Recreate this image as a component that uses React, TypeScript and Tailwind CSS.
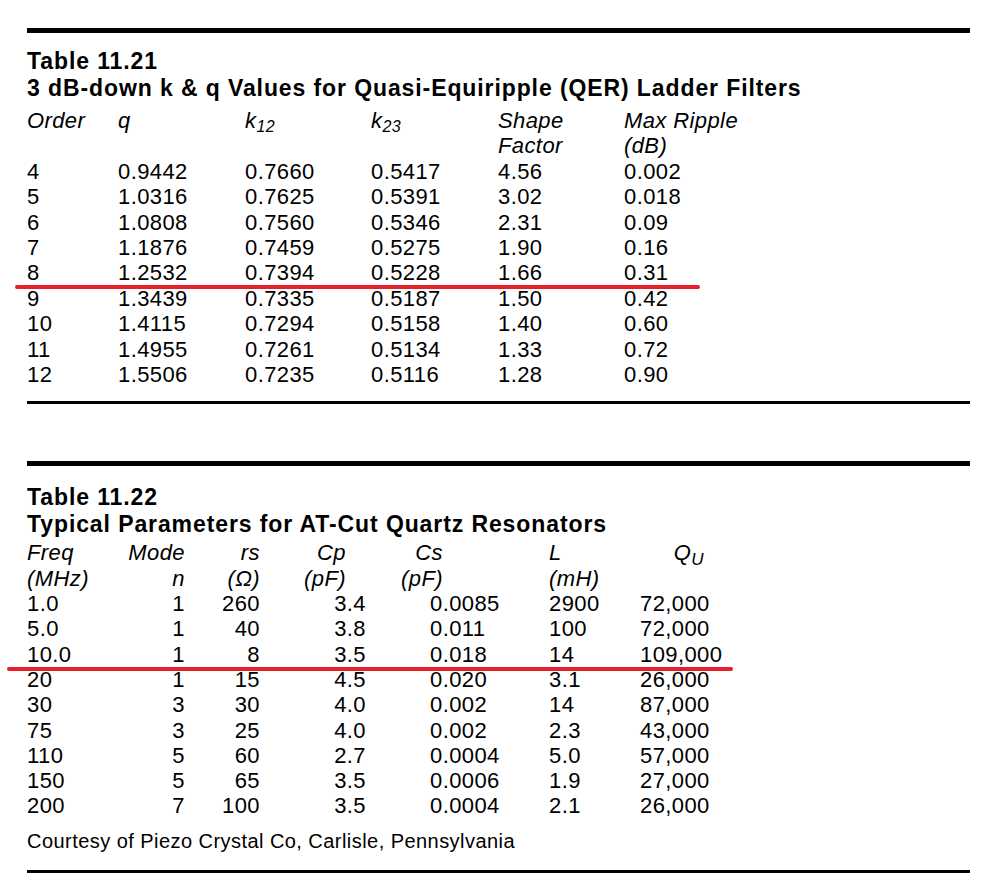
import type { ReactNode } from "react";

const font = { fontFamily: '"Liberation Sans", Arial, Helvetica, sans-serif' };

const qerRows = [
  ["4", "0.9442", "0.7660", "0.5417", "4.56", "0.002"],
  ["5", "1.0316", "0.7625", "0.5391", "3.02", "0.018"],
  ["6", "1.0808", "0.7560", "0.5346", "2.31", "0.09"],
  ["7", "1.1876", "0.7459", "0.5275", "1.90", "0.16"],
  ["8", "1.2532", "0.7394", "0.5228", "1.66", "0.31"],
  ["9", "1.3439", "0.7335", "0.5187", "1.50", "0.42"],
  ["10", "1.4115", "0.7294", "0.5158", "1.40", "0.60"],
  ["11", "1.4955", "0.7261", "0.5134", "1.33", "0.72"],
  ["12", "1.5506", "0.7235", "0.5116", "1.28", "0.90"],
];

const quartzRows = [
  ["1.0", "1", "260", "3.4", "0.0085", "2900", "72,000"],
  ["5.0", "1", "40", "3.8", "0.011", "100", "72,000"],
  ["10.0", "1", "8", "3.5", "0.018", "14", "109,000"],
  ["20", "1", "15", "4.5", "0.020", "3.1", "26,000"],
  ["30", "3", "30", "4.0", "0.002", "14", "87,000"],
  ["75", "3", "25", "4.0", "0.002", "2.3", "43,000"],
  ["110", "5", "60", "2.7", "0.0004", "5.0", "57,000"],
  ["150", "5", "65", "3.5", "0.0006", "1.9", "27,000"],
  ["200", "7", "100", "3.5", "0.0004", "2.1", "26,000"],
];

function Sub({ children }: { children: ReactNode }) {
  return <sub className="text-[16px]">{children}</sub>;
}

function Title({ num, text }: { num: string; text: string }) {
  return (
    <div className="text-[23px] font-bold leading-[27px] tracking-[0.9px]">
      <div>Table {num}</div>
      <div>{text}</div>
    </div>
  );
}

// QER table: 6 columns, all left aligned
const qerCols = "grid grid-cols-[91px_127px_126px_127px_126px_1fr]";

// Quartz table: mixed alignment per column
const qzCols = "grid grid-cols-[93px_65px_77px_104px_183px_91px_64px]";

export default function App() {
  return (
    <div
      style={font}
      className="flex h-[892px] w-[985px] flex-col bg-white pl-[27px] pr-[15px] text-[22px] tracking-[0.4px] text-black"
    >
      {/* Table 11.21 */}
      <div className="mt-[28px] h-[5px] bg-black" />
      <div className="mt-[15px]">
        <Title num="11.21" text="3 dB-down k & q Values for Quasi-Equiripple (QER) Ladder Filters" />
      </div>
      <div className="relative mt-[6px] leading-[25.4px]">
        <div className={`${qerCols} italic`}>
          <div>Order</div>
          <div>q</div>
          <div>
            k<Sub>12</Sub>
          </div>
          <div>
            k<Sub>23</Sub>
          </div>
          <div>Shape</div>
          <div>Max Ripple</div>
          <div />
          <div />
          <div />
          <div />
          <div>Factor</div>
          <div>(dB)</div>
        </div>
        {qerRows.map((r) => (
          <div key={r[0]} className={qerCols}>
            {r.map((c, i) => (
              <div key={i}>{c}</div>
            ))}
          </div>
        ))}
        <div className="absolute left-[-12px] top-[177px] h-[4px] w-[685px] rounded-full bg-[#e4202a]" />
      </div>
      <div className="mt-[14px] h-[3px] bg-black" />

      {/* Table 11.22 */}
      <div className="mt-[57px] h-[5px] bg-black" />
      <div className="mt-[18px]">
        <Title num="11.22" text="Typical Parameters for AT-Cut Quartz Resonators" />
      </div>
      <div className="relative mt-[2px] leading-[25.3px]">
        <div className={`${qzCols} italic`}>
          <div>Freq</div>
          <div className="text-right">Mode</div>
          <div className="pr-[2px] text-right">rs</div>
          <div className="pr-[20px] text-right">Cp</div>
          <div className="w-[77px] text-right">Cs</div>
          <div>L</div>
          <div className="text-right">
            Q<sub className="text-[17px]">U</sub>
          </div>
          <div>(MHz)</div>
          <div className="text-right">n</div>
          <div className="pr-[2px] text-right">(Ω)</div>
          <div className="pr-[20px] text-right">(pF)</div>
          <div className="w-[77px] text-right">(pF)</div>
          <div>(mH)</div>
          <div />
        </div>
        {quartzRows.map((r) => (
          <div key={r[0]} className={qzCols}>
            <div>{r[0]}</div>
            <div className="text-right">{r[1]}</div>
            <div className="pr-[2px] text-right">{r[2]}</div>
            <div className="text-right">{r[3]}</div>
            <div className="pl-[64px]">{r[4]}</div>
            <div>{r[5]}</div>
            <div className="text-right">{r[6]}</div>
          </div>
        ))}
        <div className="absolute left-[-20px] top-[127px] h-[4px] w-[726px] rounded-full bg-[#e4202a]" />
      </div>
      <div className="mt-[10px] text-[20px] leading-[25px] tracking-[0.45px]">
        Courtesy of Piezo Crystal Co, Carlisle, Pennsylvania
      </div>
      <div className="mt-[16px] h-[3px] bg-black" />
    </div>
  );
}
